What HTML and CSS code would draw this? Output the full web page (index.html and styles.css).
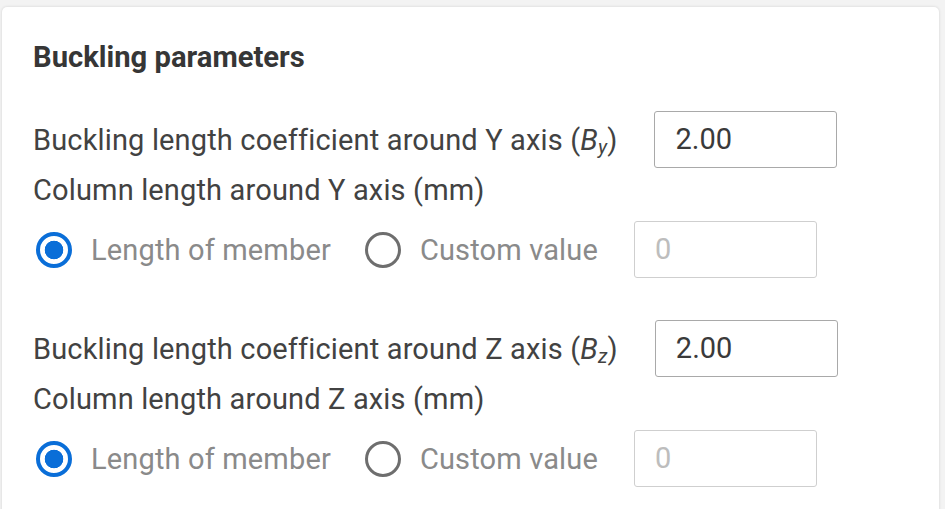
FILE: index.html
```html
<!DOCTYPE html>
<html lang="en">
<head>
<meta charset="utf-8">
<title>Buckling parameters</title>
<link rel="stylesheet" href="styles.css">
</head>
<body>
<div class="card">
  <h2 class="title">Buckling parameters</h2>

  <section class="group">
    <div class="coef-row">
      <span class="label">Buckling length coefficient around Y axis (<i>B<sub>y</sub></i>)</span>
      <div class="input">2.00</div>
    </div>
    <div class="label line">Column length around Y axis (mm)</div>
    <div class="radio-row">
      <span class="radio checked"></span>
      <span class="radio-label">Length of member</span>
      <span class="radio"></span>
      <span class="radio-label">Custom value</span>
      <div class="input disabled">0</div>
    </div>
  </section>

  <section class="group">
    <div class="coef-row">
      <span class="label">Buckling length coefficient around Z axis (<i>B<sub>z</sub></i>)</span>
      <div class="input">2.00</div>
    </div>
    <div class="label line">Column length around Z axis (mm)</div>
    <div class="radio-row">
      <span class="radio checked"></span>
      <span class="radio-label">Length of member</span>
      <span class="radio"></span>
      <span class="radio-label">Custom value</span>
      <div class="input disabled">0</div>
    </div>
  </section>
</div>
</body>
</html>
```

FILE: styles.css
```css
html, body {
  margin: 0;
  padding: 0;
  height: 100%;
  overflow: hidden;
}
body {
  background: #f3f3f3;
  font-family: Roboto, "Liberation Sans", sans-serif;
  color: #3b3b3b;
}
.card {
  margin: 7px 6px 0 2px;
  height: 600px;
  background: #fff;
  border-radius: 5px;
  box-shadow: 0 0 3px rgba(0, 0, 0, 0.14);
  padding: 32px 0 0 31px;
  box-sizing: border-box;
}
.title {
  margin: 0;
  font-size: 29.2px;
  font-weight: 700;
  line-height: 36px;
  color: #363636;
}
.group {
  margin-top: 36px;
}
.group + .group {
  margin-top: 42px;
}
.coef-row {
  display: flex;
  align-items: center;
  gap: 37px;
}
.label {
  font-size: 29px;
  letter-spacing: 0.15px;
  line-height: 44px;
  color: #424242;
}
.label i {
  font-style: italic;
}
.label sub {
  font-size: 0.68em;
  vertical-align: -0.2em;
  line-height: 0;
}
.input {
  width: 183px;
  height: 57px;
  box-sizing: border-box;
  border: 1.5px solid #a9a9a9;
  border-radius: 3px;
  padding-left: 20px;
  font-size: 29px;
  line-height: 54px;
  color: #3a3a3a;
}
.input.disabled {
  border-color: #cfcfcf;
  color: #bdbdbd;
}
.radio-row {
  display: flex;
  align-items: center;
  margin-top: 9px;
  padding-left: 3px;
}
.radio {
  width: 36px;
  height: 36px;
  box-sizing: border-box;
  border: 3px solid #6e6e6e;
  border-radius: 50%;
  flex: none;
  margin-right: 19px;
}
.radio.checked {
  border: 4px solid #0a6ed8;
  background: radial-gradient(circle, #0a6ed8 0 9px, #fff 9.6px);
}
.radio-label {
  font-size: 29px;
  letter-spacing: 0.15px;
  line-height: 44px;
  color: #8a8a8a;
  margin-right: 34px;
}
.radio-label + .input {
  margin-left: 2px;
}
```
